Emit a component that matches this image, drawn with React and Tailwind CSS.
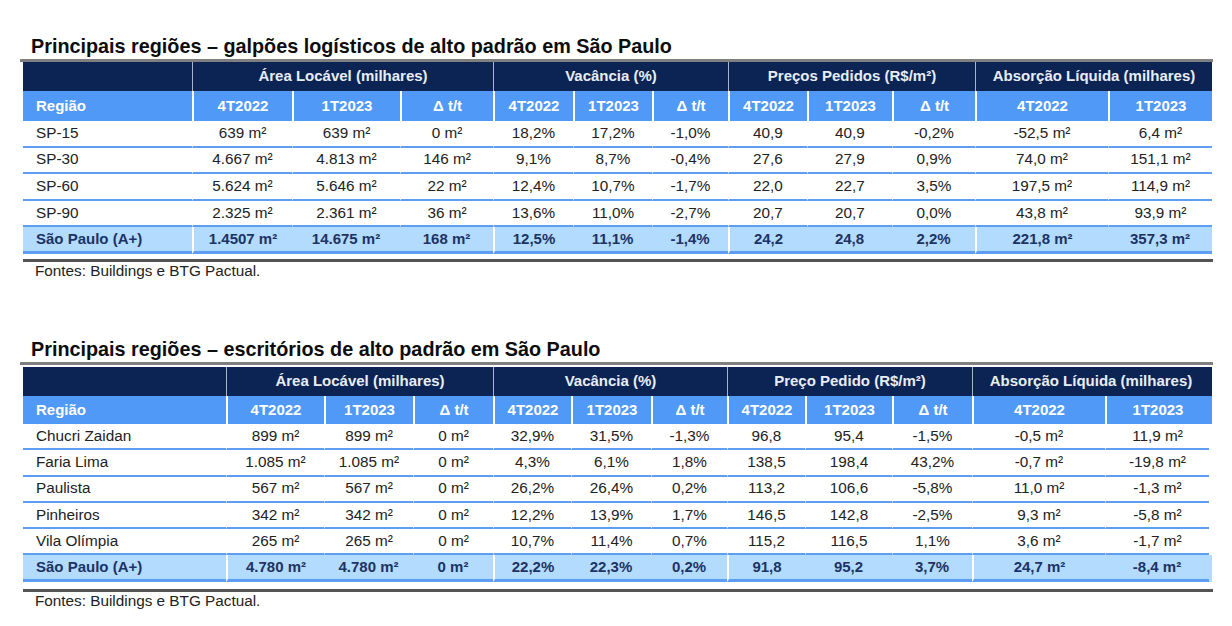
import React from "react";

const NAVY = "bg-[#0b2454]";

const t1 = {
  title: "Principais regiões – galpões logísticos de alto padrão em São Paulo",
  cols: "grid-cols-[169px_100px_108px_93px_80px_79px_76px_79px_85px_83px_133px_104px]",
  groupCols: "grid-cols-[169px_301px_235px_247px_237px]",
  groups: ["Área Locável (milhares)", "Vacância (%)", "Preços Pedidos (R$/m²)", "Absorção Líquida (milhares)"],
  rowH: "h-[26.6px]",
  hdr2: "h-[30px]",
  rows: [
    ["SP-15", "639 m²", "639 m²", "0 m²", "18,2%", "17,2%", "-1,0%", "40,9", "40,9", "-0,2%", "-52,5 m²", "6,4 m²"],
    ["SP-30", "4.667 m²", "4.813 m²", "146 m²", "9,1%", "8,7%", "-0,4%", "27,6", "27,9", "0,9%", "74,0 m²", "151,1 m²"],
    ["SP-60", "5.624 m²", "5.646 m²", "22 m²", "12,4%", "10,7%", "-1,7%", "22,0", "22,7", "3,5%", "197,5 m²", "114,9 m²"],
    ["SP-90", "2.325 m²", "2.361 m²", "36 m²", "13,6%", "11,0%", "-2,7%", "20,7", "20,7", "0,0%", "43,8 m²", "93,9 m²"],
  ],
  total: ["São Paulo (A+)", "1.4507 m²", "14.675 m²", "168 m²", "12,5%", "11,1%", "-1,4%", "24,2", "24,8", "2,2%", "221,8 m²", "357,3 m²"],
};

const t2 = {
  title: "Principais regiões – escritórios de alto padrão em São Paulo",
  cols: "grid-cols-[203px_98px_89px_80px_78px_80px_76px_78px_87px_80px_133px_104px]",
  groupCols: "grid-cols-[203px_267px_234px_245px_237px]",
  groups: ["Área Locável (milhares)", "Vacância (%)", "Preço Pedido (R$/m²)", "Absorção Líquida (milhares)"],
  rowH: "h-[26.3px]",
  hdr2: "h-[28px]",
  rows: [
    ["Chucri Zaidan", "899 m²", "899 m²", "0 m²", "32,9%", "31,5%", "-1,3%", "96,8", "95,4", "-1,5%", "-0,5 m²", "11,9 m²"],
    ["Faria Lima", "1.085 m²", "1.085 m²", "0 m²", "4,3%", "6,1%", "1,8%", "138,5", "198,4", "43,2%", "-0,7 m²", "-19,8 m²"],
    ["Paulista", "567 m²", "567 m²", "0 m²", "26,2%", "26,4%", "0,2%", "113,2", "106,6", "-5,8%", "11,0 m²", "-1,3 m²"],
    ["Pinheiros", "342 m²", "342 m²", "0 m²", "12,2%", "13,9%", "1,7%", "146,5", "142,8", "-2,5%", "9,3 m²", "-5,8 m²"],
    ["Vila Olímpia", "265 m²", "265 m²", "0 m²", "10,7%", "11,4%", "0,7%", "115,2", "116,5", "1,1%", "3,6 m²", "-1,7 m²"],
  ],
  total: ["São Paulo (A+)", "4.780 m²", "4.780 m²", "0 m²", "22,2%", "22,3%", "0,2%", "91,8", "95,2", "3,7%", "24,7 m²", "-8,4 m²"],
};

const subHeads = ["Região", "4T2022", "1T2023", "Δ t/t", "4T2022", "1T2023", "Δ t/t", "4T2022", "1T2023", "Δ t/t", "4T2022", "1T2023"];
const groupStart = [1, 4, 7, 10];

function Table({ t }) {
  return (
    <div className="w-[1189px] ml-[3px]">
      <div className={`grid ${t.groupCols} h-[29px] ${NAVY}`}>
        <div />
        {t.groups.map((g) => (
          <div key={g} className="border-l border-[#aab4c6] flex items-center justify-center text-[15px] font-bold text-[#e8edf5]">
            {g}
          </div>
        ))}
      </div>
      <div className={`grid ${t.cols} ${t.hdr2} bg-[#5199f6]`}>
        {subHeads.map((h, i) => (
          <div
            key={i}
            className={`flex items-center text-[15px] font-bold text-white ${i === 0 ? "pl-[13px] justify-start" : "justify-center border-l-2 border-white"}`}
          >
            {h}
          </div>
        ))}
      </div>
      {t.rows.map((r, ri) => (
        <div key={ri} className={`grid ${t.cols} ${t.rowH}`}>
          {r.map((c, i) => (
            <div
              key={i}
              className={`flex items-center text-[15.3px] text-[#222] border-b-2 border-b-[#5d9ef2] ${i === 0 ? "pl-[13px] justify-start" : "justify-center border-l border-l-white"}`}
            >
              {c}
            </div>
          ))}
        </div>
      ))}
      <div className={`grid ${t.cols} ${t.rowH} bg-[#b3dbfd]`}>
        {t.total.map((c, i) => (
          <div
            key={i}
            className={`flex items-center text-[15px] font-bold text-[#1c3364] border-b-[3px] border-b-[#5d9ef2] ${i === 0 ? "pl-[13px] justify-start" : "justify-center"} ${groupStart.includes(i) ? "border-l-2 border-l-white" : ""}`}
          >
            {c}
          </div>
        ))}
      </div>
    </div>
  );
}

function Block({ t, gap, bottomGap }) {
  return (
    <div className="ml-[20px] w-[1193px]">
      <div className="h-[24px] leading-[22px] pl-[11px] text-[19.8px] font-bold text-[#0d0d0d]">{t.title}</div>
      <div className={`h-[3px] bg-[#7f7f7f] ${gap}`} />
      <Table t={t} />
      <div className={bottomGap} />
      <div className="ml-[3px] h-[3px] bg-[#545454] w-[1190px]" />
      <div className="h-[18px] leading-[18px] pl-[15px] text-[15.3px] text-[#222]">Fontes: Buildings e BTG Pactual.</div>
    </div>
  );
}

export default function App() {
  return (
    <div className="w-[1232px] h-[626px] bg-white overflow-hidden font-['Liberation_Sans',Arial,sans-serif] pt-[35px]">
      <Block t={t1} gap="" bottomGap="h-[5px]" />
      <div className="h-[58px]" />
      <Block t={t2} gap="mb-[2px]" bottomGap="h-[7px]" />
    </div>
  );
}
